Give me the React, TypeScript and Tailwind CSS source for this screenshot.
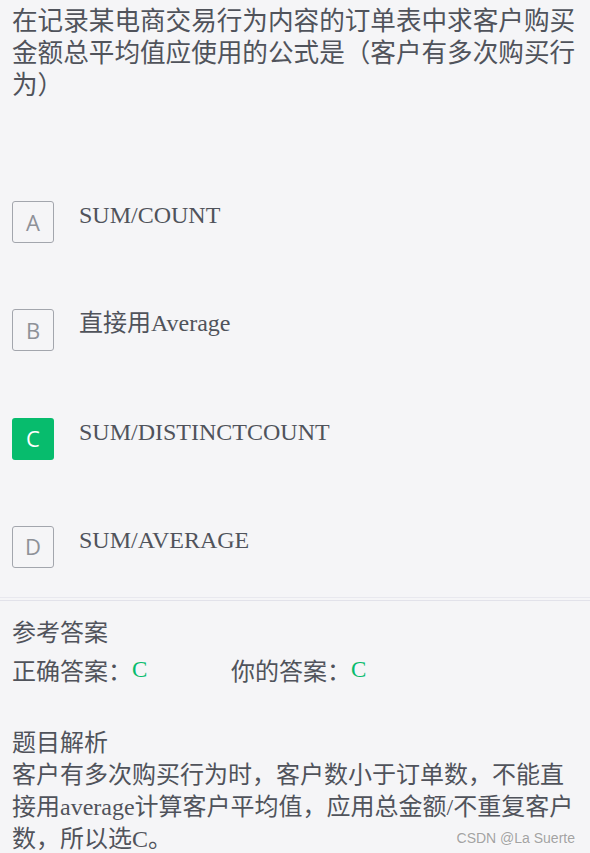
import React from "react";

const FONT = { fontFamily: '"Liberation Serif", "Noto Sans CJK SC", serif' };

function Option({ letter, text, active }: { letter: string; text: string; active?: boolean }) {
  return (
    <div className="flex items-start">
      <div
        className={
          active
            ? "w-[42px] h-[42px] rounded-[3px] bg-[#07bc6d] flex items-center justify-center text-white text-[22px] font-['Open_Sans',sans-serif]"
            : "w-[42px] h-[42px] rounded-[3px] border border-[#a3a6ad] flex items-center justify-center text-[#8e9198] text-[22px] font-['Open_Sans',sans-serif]"
        }
      >
        {letter}
      </div>
      <div className="ml-[25px] text-[24px] leading-[28px] text-[#50535b]">{text}</div>
    </div>
  );
}

export default function App() {
  return (
    <div className="relative min-h-[853px] w-[590px] bg-[#f5f5f7] text-[#50535b]" style={FONT}>
      <div className="px-3 pt-[6px] text-[25.6px] leading-[32px]">
        在记录某电商交易行为内容的订单表中求客户购买金额总平均值应使用的公式是（客户有多次购买行为）
      </div>
      <div className="mt-[99px] px-3 flex flex-col gap-[66.3px]">
        <Option letter="A" text="SUM/COUNT" />
        <Option letter="B" text="直接用Average" />
        <Option letter="C" text="SUM/DISTINCTCOUNT" active />
        <Option letter="D" text="SUM/AVERAGE" />
      </div>
      <div className="mt-[29px] h-px bg-[#e8e8ee]" />
      <div className="mt-[2px] h-px bg-[#e2e2ea]" />
      <div className="px-3 pt-[16px] text-[24px] leading-[32px]">
        <div>参考答案</div>
        <div className="mt-[7px] flex">
          <div className="w-[219px]">
            正确答案：<span className="relative -top-[3px] text-[23px] text-[#07bc6d]">C</span>
          </div>
          <div>
            你的答案：<span className="relative -top-[3px] text-[23px] text-[#07bc6d]">C</span>
          </div>
        </div>
        <div className="mt-[38px]">题目解析</div>
        <div>
          客户有多次购买行为时，客户数小于订单数，不能直接用average计算客户平均值，应用总金额/不重复客户数，所以选C。
        </div>
      </div>
      <div className="absolute right-[15px] bottom-[8px] text-[14px] leading-[18px] text-[#a3a3a3] font-['Liberation_Sans',sans-serif] [text-shadow:0_0_2px_#ffffff]">
        CSDN @La Suerte
      </div>
    </div>
  );
}
